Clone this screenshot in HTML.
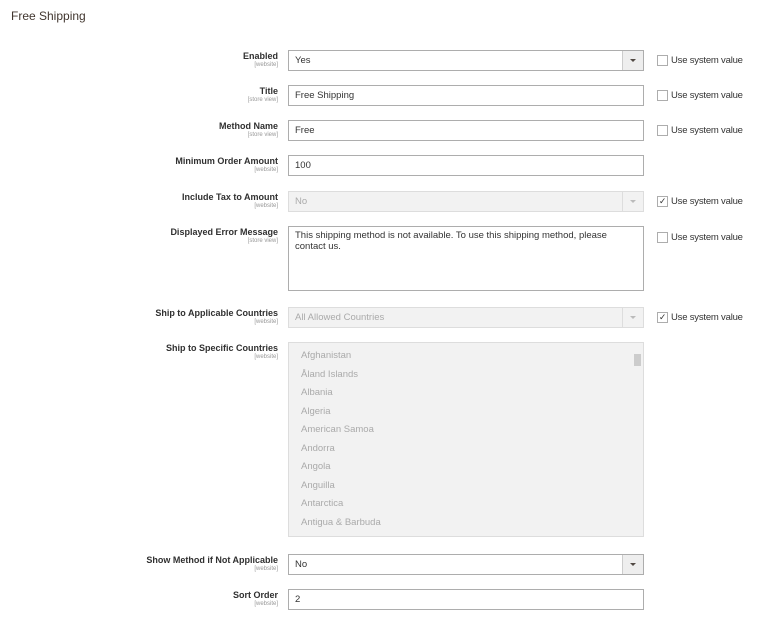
<!DOCTYPE html>
<html><head><style>
body{margin:0;width:762px;height:621px;background:#fff;font-family:"Liberation Sans",sans-serif;position:relative;overflow:hidden;color:#333}
.h{position:absolute;left:11px;top:9px;font-size:12px;color:#41362f}
.l{position:absolute;right:484px;text-align:right;font-size:9px;font-weight:bold;color:#303030;line-height:11px}
.l small{display:block;font-weight:normal;font-size:6px;color:#999;line-height:7px}
.i{position:absolute;left:288px;height:19px;border:1px solid #adadad;background:#fff;font-size:9.5px;line-height:19px;padding-left:6px;box-sizing:content-box;width:348px}
.d{background:#f2f2f2;border-color:#ddd;color:#aaa}
.ar{position:absolute;right:0;top:0;width:20px;height:100%;border-left:1px solid #ccc;background:#eee}
.d .ar{background:#f2f2f2;border-color:#ddd}
.ar:after{content:"";position:absolute;left:7px;top:8px;border:3px solid transparent;border-top:3px solid #514943}
.d .ar:after{border-top-color:#bbb}
.c{position:absolute;left:671px;font-size:9.5px;color:#333;line-height:11px;letter-spacing:-0.2px}
.c b{position:absolute;left:-14px;top:0px;width:9px;height:9px;border:1px solid #adadad;font-weight:normal;font-size:9px;line-height:9px;text-align:center}
.li{position:absolute;left:301px;font-size:9.5px;color:#aaa}
</style></head><body>
<div class="h">Free Shipping</div>

<div class="l" style="top:51px">Enabled<small>[website]</small></div>
<div class="i" style="top:50px">Yes<div class="ar"></div></div>
<div class="c" style="top:55px"><b></b>Use system value</div>

<div class="l" style="top:86px">Title<small>[store view]</small></div>
<div class="i" style="top:85px">Free Shipping</div>
<div class="c" style="top:90px"><b></b>Use system value</div>

<div class="l" style="top:121px">Method Name<small>[store view]</small></div>
<div class="i" style="top:120px">Free</div>
<div class="c" style="top:125px"><b></b>Use system value</div>

<div class="l" style="top:156px">Minimum Order Amount<small>[website]</small></div>
<div class="i" style="top:155px">100</div>

<div class="l" style="top:192px">Include Tax to Amount<small>[website]</small></div>
<div class="i d" style="top:191px">No<div class="ar"></div></div>
<div class="c" style="top:196px"><b>✓</b>Use system value</div>

<div class="l" style="top:227px">Displayed Error Message<small>[store view]</small></div>
<div class="i" style="top:226px;line-height:11px;padding-top:3px;height:60px;width:330px;padding-right:18px">This shipping method is not available. To use this shipping method, please contact us.</div>
<div class="c" style="top:232px"><b></b>Use system value</div>

<div class="l" style="top:308px">Ship to Applicable Countries<small>[website]</small></div>
<div class="i d" style="top:307px">All Allowed Countries<div class="ar"></div></div>
<div class="c" style="top:312px"><b>✓</b>Use system value</div>

<div class="l" style="top:343px">Ship to Specific Countries<small>[website]</small></div>
<div class="i d" style="top:342px;height:193px"></div>
<div style="position:absolute;left:634px;top:354px;width:7px;height:12px;background:#ccc"></div>
<div class="li" style="top:350px">Afghanistan</div>
<div class="li" style="top:369px">Åland Islands</div>
<div class="li" style="top:387px">Albania</div>
<div class="li" style="top:406px">Algeria</div>
<div class="li" style="top:424px">American Samoa</div>
<div class="li" style="top:443px">Andorra</div>
<div class="li" style="top:461px">Angola</div>
<div class="li" style="top:480px">Anguilla</div>
<div class="li" style="top:498px">Antarctica</div>
<div class="li" style="top:517px">Antigua &amp; Barbuda</div>

<div class="l" style="top:555px">Show Method if Not Applicable<small>[website]</small></div>
<div class="i" style="top:554px">No<div class="ar"></div></div>

<div class="l" style="top:590px">Sort Order<small>[website]</small></div>
<div class="i" style="top:589px">2</div>
</body></html>
